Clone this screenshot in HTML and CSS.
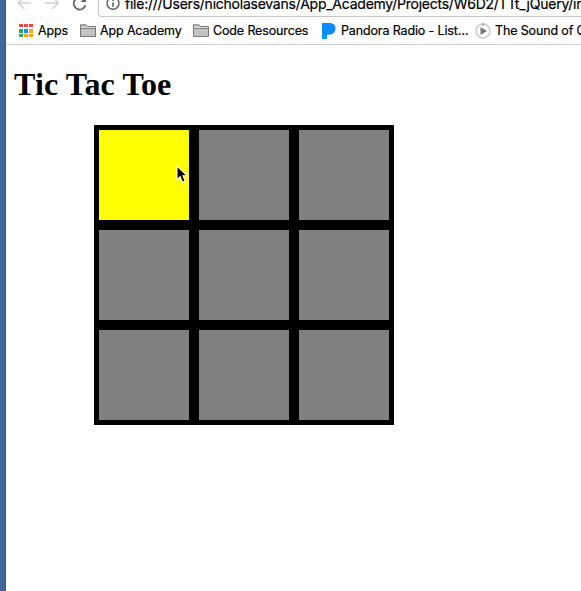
FILE: index.html
```
<!DOCTYPE html>
<html lang="en">
<head>
<meta charset="utf-8">
<title>Tic Tac Toe</title>
<link rel="stylesheet" href="styles.css">
</head>
<body>
<div class="desktop"></div>
<div class="window">
  <div class="toolbar">
    <svg class="nav" width="92" height="17" viewBox="0 0 92 17" fill="none">
      <path d="M25 3H12.5M18.5-3.5L12.3 3L18.5 9M39 3H52M46-3.5L52.2 3L46 9" stroke="#d2d2d2" stroke-width="1.6"/>
      <path d="M77-1.5A6 6 0 1 0 79.5 5.3" stroke="#666" stroke-width="1.8"/>
      <path d="M74.5 2H80V-4Z" fill="#666"/>
    </svg>
    <div class="address">
      <svg class="info" width="14" height="17" viewBox="0 0 14 17" fill="none" stroke="#5c5c5c">
        <circle cx="7" cy="3.3" r="6" stroke-width="1.4"/>
        <path d="M7 2.5V6.7M7-.4V1.1" stroke-width="1.6"/>
      </svg>
      <span class="url">file:///Users/nicholasevans/App_Academy/Projects/W6D2/TTt_jQuery/index.html</span>
    </div>
  </div>
  <nav class="bookmarks">
    <a class="bookmark apps"><svg width="14" height="14" viewBox="0 0 14 14"><path fill="#f44343" d="M0 0h4v3H0zM5 0h4v3H5zM10 0h4v3h-4z"/><path fill="#35a366" d="M0 5h4v4H0zM0 10h4v3H0z"/><path fill="#188bef" d="M5 5h4v4H5z"/><path fill="#f5a812" d="M10 5h4v4h-4zM5 10h4v3H5zM10 10h4v3h-4z"/></svg><span>Apps</span></a>
    <a class="bookmark academy"><svg width="16" height="13" viewBox="0 0 16 13"><path d="M.5 12.5V.8H6L7.5 2.5H15.5V12.5Z" fill="#c3c3c3" stroke="#777"/><path d="M1 4.5H15" stroke="#858585"/><path d="M1 3.5H15" stroke="#e0e0e0"/></svg><span>App Academy</span></a>
    <a class="bookmark code"><svg width="16" height="13" viewBox="0 0 16 13"><path d="M.5 12.5V.8H6L7.5 2.5H15.5V12.5Z" fill="#c3c3c3" stroke="#777"/><path d="M1 4.5H15" stroke="#858585"/><path d="M1 3.5H15" stroke="#e0e0e0"/></svg><span>Code Resources</span></a>
    <a class="bookmark pandora"><svg width="14" height="16" viewBox="0 0 14 16"><path d="M0 0H7.5C11.5 0 13.5 2.4 13.5 5.3C13.5 9 10.8 11.8 7 11.8H5V16H0Z" fill="#098bff"/><path d="M0 11.8H5V16H0Z" fill="#00a2ff"/></svg><span>Pandora Radio - List…</span></a>
    <a class="bookmark sound"><svg width="16" height="16" viewBox="0 0 16 16"><circle cx="8" cy="8" r="7" fill="#fff" stroke="#cecece" stroke-width="1.7"/><path d="M5.5 4L12 8L5.5 12Z" fill="#777"/><path d="M8 0V3" stroke="#359ccc"/></svg><span>The Sound of Code</span></a>
  </nav>
  <main class="page">
    <h1>Tic Tac Toe</h1>
    <div class="board">
      <div class="square active"><svg class="cursor" width="14" height="19" viewBox="0 0 14 19"><path d="M1 1V14.7L4.1 11.7L6.5 17.2L9.3 16L6.9 10.7H11Z" fill="#000" stroke="#fff" stroke-width="1.1"/></svg></div>
      <div class="square"></div><div class="square"></div>
      <div class="square"></div><div class="square"></div><div class="square"></div>
      <div class="square"></div><div class="square"></div><div class="square"></div>
    </div>
  </main>
</div>
</body>
</html>
```
FILE: styles.css
```
* { box-sizing: border-box; }
body { margin: 0; height: 591px; display: flex; overflow: hidden; background: #fefefe; }
.desktop { flex: 0 0 6px; background: linear-gradient(90deg, #42679a 0 4px, #35547f); }
.window { flex: 1; min-width: 0; overflow: hidden; color: #000; font-family: Inter, sans-serif; }
.toolbar { height: 17px; display: flex; overflow: hidden; background: #fefefe; }
.nav { flex: none; }
.address { flex: none; width: 520px; height: 17px; display: flex; padding-left: 7px; border: 1px solid #c6c6c6; border-top: 0; border-right: 0; border-bottom-left-radius: 4px; white-space: nowrap; }
.info { flex: none; margin-right: 5px; }
.url { font-size: 14px; line-height: 18px; margin-top: -5px; letter-spacing: -0.24px; -webkit-text-stroke: 0.2px #000; }
.bookmarks { height: 28px; display: flex; border-bottom: 1px solid #cfcfcf; font-size: 12.5px; font-weight: 400; letter-spacing: -0.14px; white-space: nowrap; -webkit-text-stroke: 0.2px #000; }
.bookmark { flex: none; display: flex; align-items: center; gap: 4px; height: 27px; }
.bookmark svg { flex: none; }
.apps { margin-left: 13px; width: 61px; gap: 5px; }
.academy { width: 113px; }
.code { width: 129px; }
.pandora { width: 153px; gap: 5px; }
.page { padding: 21px 8px 0; font-family: "Liberation Serif", serif; }
h1 { margin: 0 0 22px; height: 37px; font-size: 32px; line-height: 37px; letter-spacing: 0.14px; }
.board { width: 300px; height: 300px; margin-left: 80px; display: grid; grid-template-columns: repeat(3, 100px); grid-auto-rows: 100px; }
.square { position: relative; background: #808080; border: 5px solid #000; }
.active { background: #ff0; }
.cursor { position: absolute; left: 77px; top: 35px; }
```
